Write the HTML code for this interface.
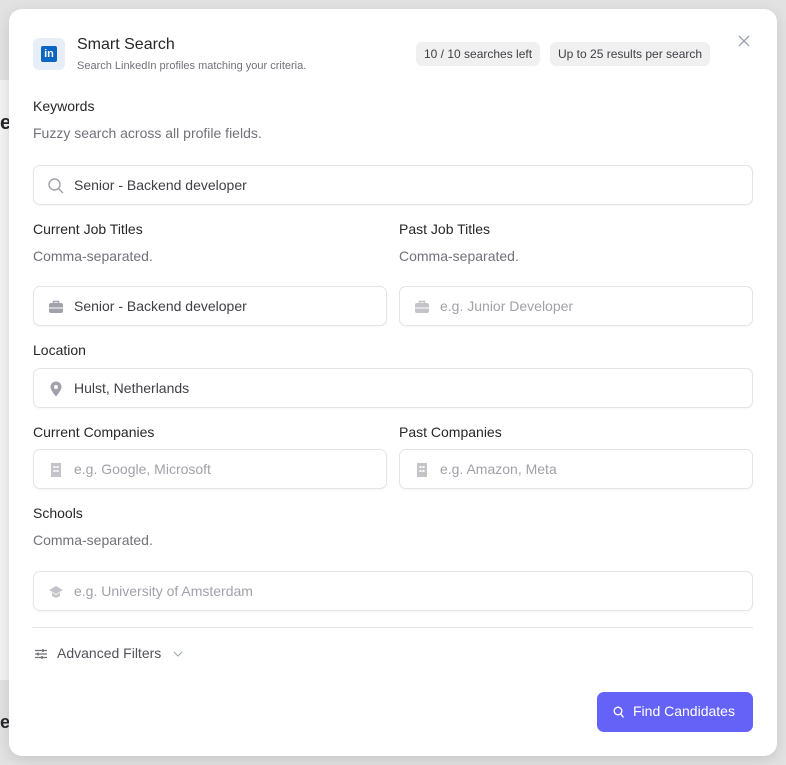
<!DOCTYPE html>
<html><head><meta charset="utf-8"><style>
*{box-sizing:border-box;margin:0;padding:0}
body{width:786px;height:765px;background:#e2e2e2;font-family:"Liberation Sans",sans-serif;position:relative;overflow:hidden;color:#27272a}
.bg{position:absolute;background:#fafafa}
.m{position:absolute;left:9px;top:9px;width:768px;height:747px;background:#fff;border-radius:13px;box-shadow:0 4px 14px rgba(0,0,0,.12)}
.a{position:absolute;white-space:nowrap}
.lbl{font-size:14px;color:#27272a}
.sub{font-size:14px;color:#71717a}
.in{position:absolute;height:40px;border:1px solid #e4e4e7;border-radius:7px;background:#fff;box-shadow:0 1px 2px rgba(0,0,0,.04)}
.in span{position:absolute;left:40px;top:11px;font-size:14px;color:#3f3f46;white-space:nowrap}
.in span.ph{color:#a1a1aa}
.in svg{position:absolute;left:13px;top:11px}
.chip{position:absolute;top:33px;height:24px;background:#f0f0f0;border-radius:6px;font-size:12px;color:#3f3f46;padding:5px 8px;white-space:nowrap}
</style></head><body>
<div class="bg" style="left:0;top:80px;width:9px;height:600px;background:#f3f3f3"></div>
<div class="a" style="left:0;top:112px;font-size:20px;font-weight:bold">e</div>
<div class="a" style="left:0;top:712px;font-size:18px;font-weight:bold">e</div>
<div class="m">
  <div class="a" style="left:24px;top:29px;width:32px;height:32px;background:#e8eef8;border-radius:6px"></div>
  <div class="a" style="left:32px;top:37px;width:16px;height:16px;background:#0a66c2;border-radius:2px;color:#fff;font-size:11px;font-weight:bold;text-align:center;line-height:16px">in</div>
  <div class="a" style="left:68px;top:27px;font-size:16px;color:#27272a">Smart Search</div>
  <div class="a" style="left:68px;top:51px;font-size:11px;color:#71717a">Search LinkedIn profiles matching your criteria.</div>
  <div class="chip" style="left:407px">10 / 10 searches left</div>
  <div class="chip" style="left:541px">Up to 25 results per search</div>
  <svg class="a" style="left:729px;top:26px" width="12" height="12" viewBox="0 0 12 12"><path d="M1 1L11 11M11 1L1 11" stroke="#9ca3af" stroke-width="1.3"/></svg>

  <div class="a lbl" style="left:24px;top:89px">Keywords</div>
  <div class="a sub" style="left:24px;top:116px">Fuzzy search across all profile fields.</div>
  <div class="in" style="left:24px;top:156px;width:720px"><svg width="18" height="18" viewBox="0 0 18 18"><circle cx="7.5" cy="7.5" r="5.5" fill="none" stroke="#a1a1aa" stroke-width="1.4"/><path d="M11.5 11.5L16 16" stroke="#a1a1aa" stroke-width="1.4"/></svg><span>Senior - Backend developer</span></div>

  <div class="a lbl" style="left:24px;top:212px">Current Job Titles</div>
  <div class="a sub" style="left:24px;top:239px">Comma-separated.</div>
  <div class="a lbl" style="left:390px;top:212px">Past Job Titles</div>
  <div class="a sub" style="left:390px;top:239px">Comma-separated.</div>
  <div class="in" style="left:24px;top:277px;width:354px"><svg width="18" height="18" viewBox="0 0 18 18"><rect x="2" y="5" width="14" height="10" rx="2" fill="#a1a1aa"/><path d="M6.5 5V3.5h5V5" fill="none" stroke="#a1a1aa" stroke-width="1.4"/><path d="M2 10h14" stroke="#fff" stroke-width="1"/></svg><span>Senior - Backend developer</span></div>
  <div class="in" style="left:390px;top:277px;width:354px"><svg width="18" height="18" viewBox="0 0 18 18"><rect x="2" y="5" width="14" height="10" rx="2" fill="#c4c4c8"/><path d="M6.5 5V3.5h5V5" fill="none" stroke="#c4c4c8" stroke-width="1.4"/><path d="M2 10h14" stroke="#fff" stroke-width="1"/></svg><span class="ph">e.g. Junior Developer</span></div>

  <div class="a lbl" style="left:24px;top:333px">Location</div>
  <div class="in" style="left:24px;top:359px;width:720px"><svg width="18" height="18" viewBox="0 0 18 18"><path d="M9 1.5C5.7 1.5 3.5 4 3.5 7c0 3.5 5.5 9.5 5.5 9.5s5.5-6 5.5-9.5C14.5 4 12.3 1.5 9 1.5z" fill="#a1a1aa"/><circle cx="9" cy="7" r="2" fill="#fff"/></svg><span>Hulst, Netherlands</span></div>

  <div class="a lbl" style="left:24px;top:415px">Current Companies</div>
  <div class="a lbl" style="left:390px;top:415px">Past Companies</div>
  <div class="in" style="left:24px;top:440px;width:354px"><svg width="18" height="18" viewBox="0 0 18 18"><rect x="4" y="2" width="10" height="14" fill="#c4c4c8"/><rect x="6.5" y="5" width="2" height="2" fill="#fff"/><rect x="9.5" y="5" width="2" height="2" fill="#fff"/><rect x="6.5" y="9" width="2" height="2" fill="#fff"/><rect x="9.5" y="9" width="2" height="2" fill="#fff"/></svg><span class="ph">e.g. Google, Microsoft</span></div>
  <div class="in" style="left:390px;top:440px;width:354px"><svg width="18" height="18" viewBox="0 0 18 18"><rect x="4" y="2" width="10" height="14" fill="#c4c4c8"/><rect x="6.5" y="5" width="2" height="2" fill="#fff"/><rect x="9.5" y="5" width="2" height="2" fill="#fff"/><rect x="6.5" y="9" width="2" height="2" fill="#fff"/><rect x="9.5" y="9" width="2" height="2" fill="#fff"/></svg><span class="ph">e.g. Amazon, Meta</span></div>

  <div class="a lbl" style="left:24px;top:496px">Schools</div>
  <div class="a sub" style="left:24px;top:523px">Comma-separated.</div>
  <div class="in" style="left:24px;top:562px;width:720px"><svg width="18" height="18" viewBox="0 0 18 18"><path d="M9 3L2 7l7 4 7-4z" fill="#c4c4c8"/><path d="M5 9.5v3.5l4 2 4-2V9.5L9 12z" fill="#c4c4c8"/></svg><span class="ph">e.g. University of Amsterdam</span></div>

  <div class="a" style="left:24px;top:618px;width:720px;height:1px;background:#e4e4e7"></div>
  <svg class="a" style="left:25px;top:638px" width="14" height="14" viewBox="0 0 14 14"><path d="M1 3.5h12M1 7h12M1 10.5h12" stroke="#71717a" stroke-width="1.2"/><path d="M9 2v3M4 5.5v3M8 9v3" stroke="#71717a" stroke-width="1.5"/></svg>
  <div class="a" style="left:48px;top:636px;font-size:14px;color:#52525b">Advanced Filters</div>
  <svg class="a" style="left:164px;top:641px" width="10" height="8" viewBox="0 0 10 8"><path d="M1 2l4 4 4-4" fill="none" stroke="#9ca3af" stroke-width="1"/></svg>

  <div class="a" style="left:588px;top:683px;width:156px;height:40px;background:#6562f7;border-radius:7px"></div>
  <svg class="a" style="left:604px;top:697px" width="12" height="13" viewBox="0 0 12 13"><circle cx="5" cy="5" r="3.8" fill="none" stroke="#fff" stroke-width="1.4"/><path d="M7.8 8L10.5 11.5" stroke="#fff" stroke-width="1.4"/></svg>
  <div class="a" style="left:624px;top:694px;font-size:14px;color:#fff">Find Candidates</div>
</div>
</body></html>
